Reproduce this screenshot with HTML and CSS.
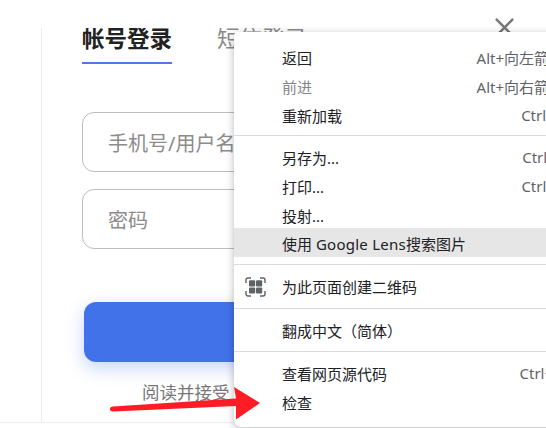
FILE: index.html
```html
<!DOCTYPE html>
<html lang="zh-CN">
<head>
<meta charset="utf-8">
<title>登录</title>
<link rel="stylesheet" href="styles.css">
</head>
<body>
<div class="page">
  <div class="panel">
    <div class="tabs">
      <span class="tab active">帐号登录</span>
      <span class="tab">短信登录</span>
    </div>
    <div class="field">手机号/用户名</div>
    <div class="field">密码</div>
    <div class="submit"></div>
    <div class="agree">阅读并接受</div>
  </div>
</div>

<svg class="close" viewBox="0 0 20 20" aria-hidden="true"><path d="M1 1 19 19M19 1 1 19"/></svg>

<div class="menu">
  <div class="section first">
    <div class="row"><span class="label">返回</span><span class="key">Alt+向左箭头</span></div>
    <div class="row disabled"><span class="label">前进</span><span class="key">Alt+向右箭头</span></div>
    <div class="row"><span class="label">重新加载</span><span class="key">Ctrl+R</span></div>
  </div>
  <div class="section lens-section">
    <div class="row"><span class="label">另存为...</span><span class="key">Ctrl+S</span></div>
    <div class="row"><span class="label">打印...</span><span class="key">Ctrl+P</span></div>
    <div class="row"><span class="label">投射...</span></div>
    <div class="row hover"><span class="label">使用 <span class="latin">Google Lens</span>搜索图片</span></div>
  </div>
  <div class="section qr-section">
    <div class="row">
      <svg class="qr" viewBox="0 0 21 20" aria-hidden="true">
        <path class="qr-frame" d="M1 6V3a2 2 0 0 1 2-2h3M15 1h3a2 2 0 0 1 2 2v3M20 14v3a2 2 0 0 1-2 2h-3M6 19H3a2 2 0 0 1-2-2v-3"/>
        <rect x="4" y="3.2" width="6.2" height="6.2" rx="1"/>
        <rect x="11" y="3.2" width="6.2" height="6.2" rx="1"/>
        <rect x="4" y="10.4" width="6.2" height="6.2" rx="1"/>
        <rect x="11" y="10.4" width="6.2" height="6.2" rx="1"/>
      </svg>
      <span class="label">为此页面创建二维码</span>
    </div>
  </div>
  <div class="section translate-section">
    <div class="row"><span class="label">翻成中文（简体）</span></div>
  </div>
  <div class="section last">
    <div class="row"><span class="label">查看网页源代码</span><span class="key">Ctrl+U</span></div>
    <div class="row"><span class="label">检查</span></div>
  </div>
</div>

<svg class="arrow" viewBox="0 0 160 40" aria-hidden="true">
  <path d="M3 19.5 126 11.5 124 0 150 16 126 32.5 126 19 3 24.5Q0 24.5 0 22 0 19.7 3 19.5Z"/>
</svg>
</body>
</html>
```

FILE: styles.css
```css
* { box-sizing: border-box; }

html, body {
  margin: 0;
  width: 546px;
  height: 428px;
  overflow: hidden;
  background: #fff;
  font-family: "Noto Sans", "Noto Sans CJK SC", sans-serif;
}

body { position: relative; }

.page {
  height: 423px;
  padding-top: 28px;
  border-bottom: 1px solid #ececec;
}

.panel {
  height: 100%;
  margin-left: 41px;
  padding-left: 40px;
  border-left: 1px solid #ececec;
  overflow: hidden;
}

.tabs {
  display: flex;
  gap: 45px;
  height: 36px;
  margin-bottom: 48px;
  width: 260px;
}

.tab {
  flex: none;
  height: 36px;
  font-size: 22.5px;
  line-height: 22px;
  color: #8a8a8a;
}

.tab.active {
  width: 90px;
  font-weight: 700;
  color: #222;
  border-bottom: 2px solid #4f78ea;
}

.field {
  width: 300px;
  height: 60px;
  margin-bottom: 17px;
  padding-left: 25px;
  border: 1px solid #bdbdbd;
  border-radius: 12px;
  font-size: 20px;
  line-height: 61px;
  color: #8c8c8c;
}

.submit {
  width: 300px;
  height: 60px;
  margin: 53px 0 17px 2px;
  border-radius: 12px;
  background: #4272ea;
  box-shadow: 0 6px 18px rgba(66, 114, 234, .3);
}

.agree {
  margin-left: 60px;
  font-size: 17.5px;
  line-height: 26px;
  color: #777;
}

.close {
  position: absolute;
  left: 495px;
  top: 18px;
  width: 19px;
  height: 19px;
  fill: none;
  stroke: #777;
  stroke-width: 2.6;
}

.menu {
  position: absolute;
  left: 234px;
  top: 32px;
  width: 352px;
  height: 395px;
  border-radius: 4px 4px 8px 8px;
  background: #fff;
  box-shadow: 0 2px 9px rgba(0, 0, 0, .28);
  font-size: 15px;
  color: #202124;
}

.section {
  padding-top: 8px;
  border-bottom: 1px solid #dcdcdc;
}

.section.first { padding: 12px 0 4px; }
.section.lens-section { padding-bottom: 7px; }
.section.qr-section { padding-bottom: 6px; }
.section.translate-section { padding-bottom: 5px; }
.section.last { border-bottom: 0; }

.row {
  position: relative;
  display: flex;
  justify-content: space-between;
  align-items: center;
  height: 29px;
  padding: 0 22px 3px 48px;
  white-space: nowrap;
}

.row.hover {
  margin-top: -3px;
  padding-top: 2px;
  padding-bottom: 0;
  background: #e6e6e6;
}

.row.disabled .label { color: #80868b; }

.latin { letter-spacing: .25px; }

.key { color: #5f6368; }

.qr {
  position: absolute;
  left: 11px;
  top: 4px;
  width: 21px;
  height: 20px;
  fill: #5f6368;
}

.qr-frame {
  fill: none;
  stroke: #5f6368;
  stroke-width: 1.4;
}

.arrow {
  position: absolute;
  left: 110px;
  top: 387px;
  width: 160px;
  height: 40px;
  fill: #ff1c24;
}
```
